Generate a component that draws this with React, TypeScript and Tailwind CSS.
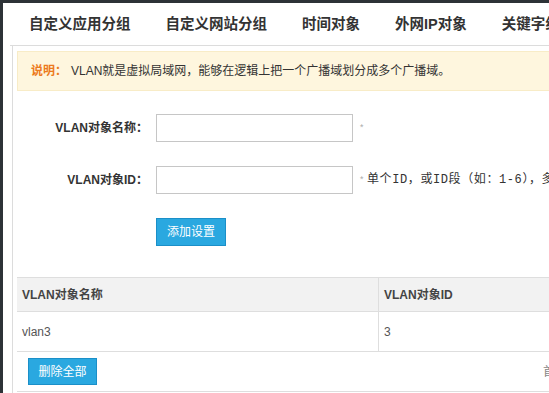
import { FC } from 'react';

const cjk = "font-['Liberation_Sans','Noto_Sans_CJK_SC',sans-serif]";

const tabs = ['自定义应用分组', '自定义网站分组', '时间对象', '外网IP对象', '关键字组'];

type FieldRowProps = {
  label: string;
  hint?: string;
};

const FieldRow: FC<FieldRowProps> = ({ label, hint }) => (
  <div className="flex h-[28px] items-center">
    <label className="w-[131px] shrink-0 text-right text-[12px] font-bold text-[#333]">
      {label}：
    </label>
    <input
      type="text"
      className="ml-[8px] h-[28px] w-[197px] shrink-0 border border-[#c6c6c6] bg-white outline-none"
    />
    <span className="ml-[6px] whitespace-nowrap font-['Liberation_Mono','Noto_Sans_CJK_SC',monospace] text-[12px] tracking-[0.6px] text-[#333]">
      <span className="mr-[2px] text-[9px] text-[#aaa]">*</span>
      {hint}
    </span>
  </div>
);

const App: FC = () => {
  return (
    <div
      className={`h-[393px] w-[549px] overflow-hidden bg-[#2d3237] pl-[3px] pt-[3px] ${cjk}`}
    >
      <div className="flex h-full flex-col bg-white">
        <nav className="ml-[7px] flex h-[43px] shrink-0 items-center gap-[35px] whitespace-nowrap border-b border-[#dcdcdc] pl-[19px] pt-[2px]">
          {tabs.map((tab) => (
            <span key={tab} className="text-[14.5px] font-bold text-[#333]">
              {tab}
            </span>
          ))}
        </nav>
        <div className="ml-[9px] flex flex-1 flex-col border-l border-[#dcdcdc] pl-[4px] pt-[5px]">
          <div className="flex h-[40px] w-[560px] items-center whitespace-nowrap border border-[#f8ecc7] bg-[#fef6de] pl-[13px] text-[12px]">
            <span className="font-bold text-[#ec7a1c]">说明：</span>
            <span className="ml-[4px] text-[#333]">
              VLAN就是虚拟局域网，能够在逻辑上把一个广播域划分成多个广播域。
            </span>
          </div>

          <div className="mt-[23px] flex flex-col gap-[24px]">
            <FieldRow label="VLAN对象名称" />
            <FieldRow
              label="VLAN对象ID"
              hint="单个ID，或ID段（如：1-6），多个以逗号分隔"
            />
            <div className="flex">
              <button className="ml-[139px] h-[28px] w-[70px] border border-[#1b8fc8] bg-[#2aa8e0] text-[12px] text-white">
                添加设置
              </button>
            </div>
          </div>

          <div className="mt-[31px] w-[600px] border-t border-[#dedede] text-[12px]">
            <div className="flex h-[34px] border-b border-[#dedede] bg-[#f2f2f2] font-bold text-[#444]">
              <div className="flex w-[362px] items-center border-r border-[#dedede] pl-[5px]">
                VLAN对象名称
              </div>
              <div className="flex flex-1 items-center pl-[5px]">VLAN对象ID</div>
            </div>
            <div className="flex h-[40px] border-b border-[#dedede] text-[#555]">
              <div className="flex w-[362px] items-center border-r border-[#dedede] pl-[5px]">
                vlan3
              </div>
              <div className="flex flex-1 items-center pl-[5px]">3</div>
            </div>
            <div className="flex h-[40px] items-center border-b border-[#dedede] text-[#888]">
              <button className="ml-[11px] h-[27px] w-[69px] border border-[#1b8fc8] bg-[#2aa8e0] text-[12px] text-white">
                删除全部
              </button>
              <span className="ml-[446px] whitespace-nowrap">首页</span>
            </div>
          </div>
        </div>
      </div>
    </div>
  );
};

export default App;
